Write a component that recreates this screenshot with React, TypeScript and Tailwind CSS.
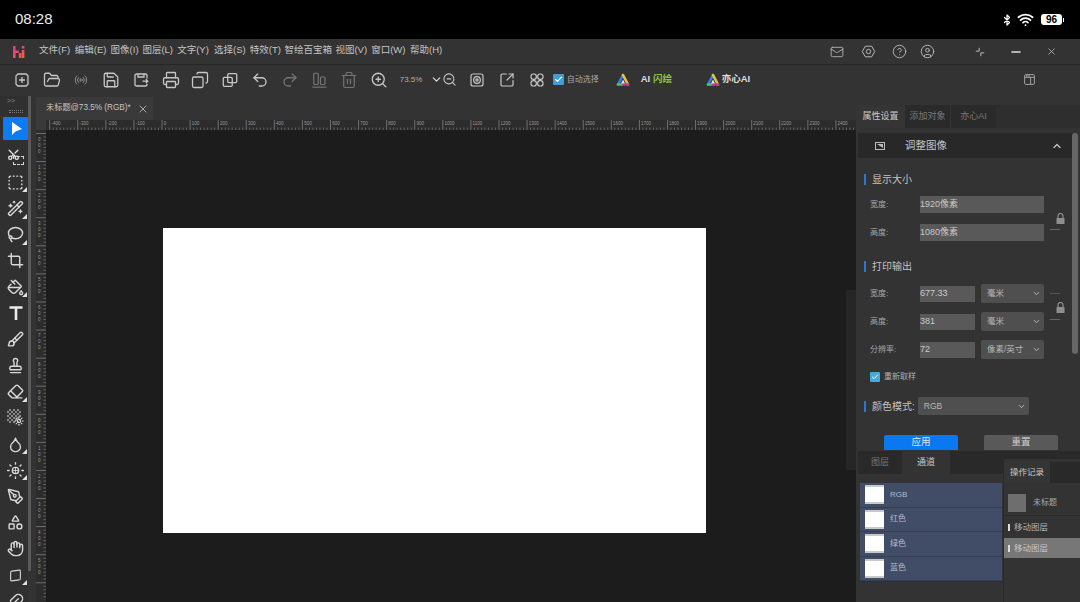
import React from 'react';
import {
  Bluetooth, Wifi, Mail, HelpCircle, CircleUser, Minus, X, FolderOpen, Radio, Save, Printer, Copy,
  Undo2, Redo2, Trash2, ZoomIn, ZoomOut, ChevronDown, ChevronUp, SquareArrowOutUpRight, Check,
  Scissors, SquareDashed, Lasso, Crop, PaintBucket, Brush, Stamp, Eraser, Droplet, PenTool,
  Shapes, Hand, Wand2, Sun, Plus, Square, Feather,
} from 'lucide-react';

const FONT = "font-['Liberation_Sans','Noto_Sans_CJK_SC',sans-serif]";

const menus = [
  ['文件(F)', 'w-[30px]'], ['编辑(E)', 'w-[30px]'], ['图像(I)', 'w-[26px]'], ['图层(L)', 'w-[29px]'],
  ['文字(Y)', 'w-[31px]'], ['选择(S)', 'w-[30px]'], ['特效(T)', 'w-[29px]'], ['智绘百宝箱', 'w-[45px]'],
  ['视图(V)', 'w-[30px]'], ['窗口(W)', 'w-[33px]'], ['帮助(H)', 'w-[32px]'],
];

function Logo() {
  return (
    <svg width="12" height="14" viewBox="0 0 12 14" className="shrink-0">
      <defs>
        <linearGradient id="hi" x1="0" y1="0" x2="1" y2="1">
          <stop offset="0" stopColor="#e0359b" />
          <stop offset="1" stopColor="#f0633a" />
        </linearGradient>
      </defs>
      <path d="M0 1h2.600v4.500h3.200V8H2.600v5H0zM5.800 8h2.600v5H5.800zM8.800 5h2.600v8H8.800zM8.800 1h2.600v2.600H8.800z" fill="url(#hi)" />
    </svg>
  );
}

function AiLogo() {
  return (
    <svg width="14" height="14" viewBox="0 0 14 14" fill="none" strokeWidth="2.600" strokeLinecap="round">
      <path d="M7 2 2 11.500" stroke="#2f80ed" />
      <path d="M7 2 12 11.500" stroke="#e8c33a" />
      <path d="M2 11.500h4" stroke="#4cc26a" />
      <path d="M12 11.500H7" stroke="#c0399b" />
      <path d="M7 6.500 9 10.500H5z" fill="#e6e6e6" stroke="none" />
    </svg>
  );
}

function LockIcon() {
  return (
    <svg width="9" height="11" viewBox="0 0 9 11" className="block">
      <path d="M2 5V3a2.500 2.500 0 0 1 5 0v2" fill="none" stroke="#8e8e8e" strokeWidth="1.200" />
      <rect x="0.500" y="5" width="8" height="6" rx="0.500" fill="#8e8e8e" />
    </svg>
  );
}

const ic = 'w-[18px] h-[18px] text-[#c8c8c8]';
const icDim = 'w-[18px] h-[18px] text-[#747474]';

function ToolbarIcons() {
  return (
    <>
      <svg viewBox="0 0 24 24" fill="none" stroke="currentColor" strokeWidth="1.700" className={ic}>
        <path d="M4 6.500 6.500 4h11L20 6.500v11L17.500 20h-11L4 17.500zM12 8v8M8 12h8" />
      </svg>
      <FolderOpen className={ic} strokeWidth={1.7} />
      <Radio className="w-[14px] h-[14px] text-[#8a8a8a]" strokeWidth={1.7} />
      <Save className={ic} strokeWidth={1.7} />
      <svg viewBox="0 0 24 24" fill="none" stroke="currentColor" strokeWidth="1.700" className={ic}>
        <path d="M20 10V5.500L18.500 4H5.500L4 5.500v13L5.500 20h13l1.500-1.500V17M8 4v4h8V4M14 13.500h7M18.500 11l2.500 2.500-2.500 2.500" />
      </svg>
      <Printer className={ic} strokeWidth={1.7} />
      <Copy className={`${ic} -scale-x-100`} strokeWidth={1.7} />
      <svg viewBox="0 0 24 24" fill="none" stroke="currentColor" strokeWidth="1.700" className={ic}>
        <rect x="9" y="3.500" width="12" height="12" rx="1.500" />
        <rect x="3" y="8.500" width="12" height="12" rx="1.500" />
      </svg>
      <Undo2 className={ic} strokeWidth={1.7} />
      <Redo2 className={icDim} strokeWidth={1.7} />
      <svg viewBox="0 0 24 24" fill="none" stroke="currentColor" strokeWidth="1.600" className={icDim}>
        <rect x="5" y="3" width="6" height="15" rx="1" />
        <rect x="14" y="8" width="6" height="10" rx="1" />
        <path d="M3 21.500h19" />
      </svg>
      <Trash2 className={icDim} strokeWidth={1.6} />
      <ZoomIn className={ic} strokeWidth={1.7} />
    </>
  );
}

function Corner() {
  return <span className="absolute right-[1px] bottom-[3px] w-0 h-0 border-l-[5px] border-l-transparent border-b-[5px] border-b-[#e0e0e0]" />;
}

const toolIc = 'w-[17px] h-[17px] text-[#d8d8d8]';
const tools: [React.ReactNode, boolean][] = [
  [<svg width="14" height="16" viewBox="0 0 14 16"><path d="M3 1v13l3.500-3.500L13 8z" fill="#fff" /></svg>, false],
  [
    <span className="relative block w-[17px] h-[17px]">
      <Scissors className="w-[13px] h-[13px] text-[#e4e4e4] -rotate-90" strokeWidth={2.4} />
      <span className="absolute right-0 bottom-0 w-[11px] h-[9px] border border-dashed border-[#d8d8d8]" />
    </span>,
    false,
  ],
  [<SquareDashed className={toolIc} strokeWidth={2} />, true],
  [<Wand2 className={toolIc} strokeWidth={2} />, true],
  [<Lasso className={toolIc} strokeWidth={2} />, true],
  [<Crop className={toolIc} strokeWidth={2} />, false],
  [<PaintBucket className={toolIc} strokeWidth={2} />, true],
  [
    <svg width="16" height="16" viewBox="0 0 16 16" fill="none" stroke="#ececec" strokeWidth="2.600">
      <path d="M1.500 2.500h13M8 2.500V15" />
    </svg>,
    false,
  ],
  [<Brush className={toolIc} strokeWidth={2} />, false],
  [<Stamp className={toolIc} strokeWidth={2} />, false],
  [<Eraser className={toolIc} strokeWidth={2} />, true],
  [
    <span className="relative block w-[17px] h-[17px]">
      <span className="absolute left-0 top-0 w-[14px] h-[14px] bg-[repeating-conic-gradient(#888_0_25%,#333_0_50%)] bg-[length:4px_4px]" />
      <Sun className="absolute right-0 bottom-0 w-[10px] h-[10px] text-[#ddd]" strokeWidth={2.5} />
    </span>,
    false,
  ],
  [<Droplet className={toolIc} strokeWidth={2} />, true],
  [
    <span className="relative block w-[19px] h-[19px]">
      <Sun className="w-[19px] h-[19px] text-[#d8d8d8]" strokeWidth={1.7} />
      <Plus className="absolute left-[6px] top-[6px] w-[7px] h-[7px] text-[#d8d8d8]" strokeWidth={3} />
    </span>,
    true,
  ],
  [<PenTool className={toolIc} strokeWidth={2} />, false],
  [<Shapes className={toolIc} strokeWidth={2} />, false],
  [<Hand className={toolIc} strokeWidth={2} />, false],
  [<Square className="w-[13px] h-[13px] text-[#d8d8d8] skew-y-[-8deg]" strokeWidth={2} />, true],
  [<Feather className={toolIc} strokeWidth={2} />, false],
];

const hLabels = [-400, -300, -200, -100, 0, 100, 200, 300, 400, 500, 600, 700, 800, 900, 1000, 1100, 1200, 1300, 1400, 1500, 1600, 1700, 1800, 1900, 2000, 2100, 2200, 2300, 2400];

function HRuler() {
  return (
    <svg width="809" height="10" className="block shrink-0">
      {Array.from({ length: 230 }, (_, i) => {
        const x = 3.7 + i * 3.51;
        const major = i % 8 === 0;
        return <line key={i} x1={x} x2={x} y1={major ? 0 : 7.5} y2="10" stroke={major ? '#8a8a8a' : '#777'} strokeWidth="0.7" />;
      })}
      {hLabels.map((n, i) => (
        <text key={n} x={5.5 + i * 28.07} y="5" fontSize="4.500" fill="#9a9a9a" fontFamily="Liberation Sans">{n}</text>
      ))}
    </svg>
  );
}

function VRuler() {
  return (
    <svg width="10" height="470" className="block shrink-0">
      {Array.from({ length: 135 }, (_, i) => {
        const y = 3.5 + i * 3.51;
        const major = i % 8 === 0;
        return <line key={i} x1={major ? 0 : 7.5} x2="10" y1={y} y2={y} stroke={major ? '#8a8a8a' : '#777'} strokeWidth="0.7" />;
      })}
      {Array.from({ length: 16 }, (_, i) => (
        <g key={i} fill="#9a9a9a" fontSize="4.500" fontFamily="Liberation Sans">
          <text x="2" y={11 + i * 28.07}>{i % 10}</text>
          <text x="2" y={17 + i * 28.07}>0</text>
          <text x="2" y={23 + i * 28.07}>0</text>
        </g>
      ))}
    </svg>
  );
}

function SectionTitle({ children }: { children: React.ReactNode }) {
  return (
    <div className="flex items-center h-[14px] text-[10px] text-[#c4c4c4] pl-[7px]">
      <span className="w-[2px] h-[11px] bg-[#2a78d0] mr-[6px]" />
      {children}
    </div>
  );
}

function Field({ label, value, wide }: { label: string; value: string; wide?: boolean }) {
  return (
    <div className={`flex items-center pl-[14px] ${wide ? 'h-[17px]' : 'h-[16px]'}`}>
      <span className="w-[50px] text-[8px] text-[#a8a8a8]">{label}</span>
      <span className={`h-full flex items-center bg-[#595959] text-[9px] text-[#c8c8c8] ${wide ? 'w-[124px]' : 'w-[55px]'}`}>{value}</span>
    </div>
  );
}

function SelectBox({ text, className }: { text: string; className: string }) {
  return (
    <span className={`flex items-center justify-between rounded-[2px] bg-[#4f4f4f] text-[8.500px] text-[#b8b8b8] pl-[6px] pr-[3px] ${className}`}>
      {text}
      <ChevronDown className="w-[9px] h-[9px] text-[#bbb]" strokeWidth={2.5} />
    </span>
  );
}

function PrintRow({ label, value, unit }: { label: string; value: string; unit: string }) {
  return (
    <div className="flex items-center h-[19px] pl-[14px]">
      <span className="w-[50px] text-[8px] text-[#a8a8a8]">{label}</span>
      <span className="w-[55px] h-[16px] flex items-center bg-[#595959] text-[9px] text-[#c8c8c8]">{value}</span>
      <SelectBox text={unit} className="w-[63px] h-[19px] ml-[6px]" />
    </div>
  );
}

function Channel({ name }: { name: string }) {
  return (
    <div className="flex items-center h-[24.500px] pl-[5px] border-b border-[#343d52]">
      <span className="w-[19px] h-[19px] bg-white border-y-2 border-y-[#c9c9c9]" />
      <span className="ml-[6px] text-[8px] text-[#b4bccb]">{name}</span>
    </div>
  );
}

export default function App() {
  return (
    <div className={`w-[1080px] h-[602px] overflow-hidden flex flex-col bg-[#333] ${FONT}`}>
      {/* Status bar */}
      <div className="h-[39px] shrink-0 bg-black flex items-center justify-between pl-[15px] pr-[16px] text-white">
        <span className="text-[15px] font-medium text-[#eee]">08:28</span>
        <div className="flex items-center">
          <Bluetooth className="w-[12px] h-[14px]" strokeWidth={2.5} />
          <Wifi className="w-[17px] h-[17px] ml-[4px]" strokeWidth={2.5} />
          <span className="ml-[7px] w-[21px] h-[11px] rounded-[3px] bg-white text-black text-[10px] leading-[11px] font-bold text-center">96</span>
          <span className="w-[1px] h-[4px] bg-white ml-[1px]" />
        </div>
      </div>

      {/* Menu bar */}
      <div className="h-[26px] shrink-0 flex items-center border-b border-[#262626] text-[9.500px] text-[#c4c4c4]">
        <span className="ml-[13px] mr-[14px] flex"><Logo /></span>
        <div className="flex gap-[5.800px] mb-[2px]">
          {menus.map(([m, w]) => (
            <span key={m} className={`${w} whitespace-nowrap`}>{m}</span>
          ))}
        </div>
        <div className="ml-auto flex items-center text-[#b8b8b8]">
          <Mail className="w-[14px] h-[14px]" strokeWidth={1.5} />
          <svg viewBox="0 0 24 24" fill="none" stroke="currentColor" strokeWidth="1.600" className="w-[15px] h-[15px] ml-[17px]">
            <path d="M7 3.500h10L22 12l-5 8.500H7L2 12z" />
            <circle cx="12" cy="12" r="3.500" />
          </svg>
          <HelpCircle className="w-[15px] h-[15px] ml-[16px]" strokeWidth={1.5} />
          <CircleUser className="w-[15px] h-[15px] ml-[13px]" strokeWidth={1.5} />
          <svg viewBox="0 0 12 12" fill="none" stroke="currentColor" strokeWidth="1.200" className="w-[10px] h-[10px] ml-[40px]">
            <path d="M5 1v4H1M11 7H7v4" />
          </svg>
          <Minus className="w-[14px] h-[14px] ml-[24px] text-[#ddd]" strokeWidth={2.2} />
          <X className="w-[11px] h-[11px] ml-[23px]" strokeWidth={1.8} />
          <span className="w-[23px]" />
        </div>
      </div>

      {/* Toolbar */}
      <div className="h-[31px] shrink-0 flex items-center text-[#c8c8c8] pb-[2px]">
        <div className="ml-[7px] grid grid-cols-[repeat(13,29.750px)] justify-items-center items-center">
          <ToolbarIcons />
        </div>
        <span className="ml-[6px] text-[8px] text-[#b0b0b0] w-[24px]">73.5%</span>
        <ChevronDown className="w-[13px] h-[13px] ml-[6px] text-[#ddd]" strokeWidth={2.2} />
        <ZoomOut className="w-[15px] h-[15px] -ml-[1px]" strokeWidth={1.7} />
        <svg viewBox="0 0 24 24" fill="none" stroke="currentColor" strokeWidth="1.800" className="w-[16px] h-[16px] ml-[12px]">
          <rect x="3" y="3" width="18" height="18" rx="3" />
          <circle cx="12" cy="12" r="5" />
          <circle cx="12" cy="12" r="1.800" />
        </svg>
        <SquareArrowOutUpRight className="w-[16px] h-[16px] ml-[14px]" strokeWidth={1.8} />
        <svg viewBox="0 0 24 24" fill="none" stroke="currentColor" strokeWidth="1.800" className="w-[16px] h-[16px] ml-[14px]">
          <rect x="3" y="3" width="8" height="8" rx="3.500" />
          <rect x="13" y="3" width="8" height="8" rx="3.500" />
          <rect x="3" y="13" width="8" height="8" rx="3.500" />
          <rect x="13" y="13" width="8" height="8" rx="3.500" />
        </svg>
        <span className="ml-[8px] w-[11px] h-[11px] rounded-[1px] bg-[#3d9fd8] flex items-center justify-center">
          <Check className="w-[9px] h-[9px] text-white" strokeWidth={3} />
        </span>
        <span className="ml-[3px] text-[8px] text-[#a8a8a8] whitespace-nowrap w-[33px]">自动选择</span>
        <span className="ml-[16px] flex"><AiLogo /></span>
        <span className="ml-[11px] text-[9.500px] font-bold text-[#ddd] whitespace-nowrap w-[30px]">AI <span className="text-[#8cc63f]">闪绘</span></span>
        <span className="ml-[35px] flex"><AiLogo /></span>
        <span className="ml-[2px] text-[9.500px] font-bold text-[#ddd] whitespace-nowrap">亦心AI</span>
        <svg viewBox="0 0 24 24" fill="none" stroke="currentColor" strokeWidth="1.700" className="w-[13px] h-[13px] ml-auto mr-[44px] text-[#aaa]">
          <rect x="3" y="3" width="18" height="18" rx="2" />
          <path d="M3 8h18M14 8v13M7 3v5M11 3v5" />
        </svg>
      </div>

      {/* Body */}
      <div className="flex-1 min-h-0 flex">
        {/* Tool column */}
        <div className="w-[28px] shrink-0 flex flex-col bg-[#303030] pl-[3px]">
          <div className="h-[10px] shrink-0 text-[7px] leading-[9px] text-[#888] pl-[4px]">&gt;&gt;</div>
          <div className="h-[11px] shrink-0 flex justify-center items-center">
            <span className="w-[14px] h-[3px] border-y border-dotted border-[#777]" />
          </div>
          {tools.map(([icon, corner], i) => (
            <div
              key={i}
              className={`relative shrink-0 w-[25px] flex items-center justify-center ${i === 0 ? 'bg-[#0d7bf2] rounded-[1px] h-[23px] mb-[3px]' : 'h-[26.200px]'}`}
            >
              {icon}
              {corner && <Corner />}
            </div>
          ))}
        </div>
        <div className="w-[8px] shrink-0 flex">
          <span className="w-[3px] h-[475px] bg-[#5a5a5a]" />
        </div>

        {/* Document area */}
        <div className="flex-1 min-w-0 flex flex-col">
          <div className="h-[24px] shrink-0 flex items-end">
            <div className="w-[117px] h-[23px] bg-[#3a3a3a] flex items-center text-[8.200px] text-[#c4c4c4] pl-[10px] whitespace-nowrap">
              未标题@73.5% (RGB)*
              <X className="w-[12px] h-[12px] ml-[6px]" strokeWidth={1.6} />
            </div>
          </div>
          <div className="h-[10px] shrink-0 flex bg-[#2c2c2c]">
            <span className="w-[10px] shrink-0 bg-[#3a3a3a]" />
            <HRuler />
          </div>
          <div className="flex-1 min-h-0 flex">
            <div className="bg-[#2c2c2c] w-[10px] shrink-0"><VRuler /></div>
            <div className="flex-1 bg-[#1c1c1c] relative">
              <div className="w-[543px] h-[305px] bg-white ml-[117px] mt-[98px]" />
              <span className="absolute right-0 top-[160px] w-[10px] h-[180px] bg-[#262626]" />
            </div>
          </div>
        </div>

        {/* Right panel */}
        <div className="relative w-[224px] shrink-0 bg-[#333] flex flex-col">
          <div className="h-[9px] shrink-0" />
          <div className="h-[23px] shrink-0 flex text-[9px]">
            <span className="w-[49px] bg-[#353535] text-[#c8c8c8] flex items-center justify-center">属性设置</span>
            <span className="w-[45px] bg-[#2a2a2a] text-[#777] flex items-center justify-center">添加对象</span>
            <span className="w-[45px] ml-[1px] bg-[#2a2a2a] text-[#777] flex items-center justify-center">亦心AI</span>
            <span className="flex-1 bg-[#2e2e2e]" />
          </div>
          <div className="h-[5px] shrink-0" />
          <div className="flex-1 min-h-0 flex flex-col relative">
            <span className="absolute right-[2px] top-0 w-[6px] h-[221px] rounded-full bg-[#666]" />
            <div className="ml-[2px] mr-[8px] h-[25px] shrink-0 bg-[#282828] flex items-center text-[#c4c4c4]">
              <svg width="10" height="8" viewBox="0 0 10 8" className="ml-[17px]">
                <rect x="0.500" y="0.500" width="9" height="7" fill="none" stroke="#bbb" />
                <path d="M2 2h6v4z" fill="#bbb" />
              </svg>
              <span className="ml-[20px] text-[10.500px]">调整图像</span>
              <ChevronUp className="ml-auto mr-[9px] w-[12px] h-[12px]" strokeWidth={2.5} />
            </div>
            <div className="mt-[14px] pl-[1px]"><SectionTitle>显示大小</SectionTitle></div>
            <div className="mt-[10px] flex">
              <div className="flex flex-col gap-[11px]">
                <Field label="宽度:" value="1920像素" wide />
                <Field label="高度:" value="1080像素" wide />
              </div>
              <div className="ml-[6px] mt-[17px] flex flex-col items-start">
                <span className="ml-[6px]"><LockIcon /></span>
                <span className="mt-[5px] w-[10px] h-px bg-[#666]" />
              </div>
            </div>
            <div className="mt-[18px] pl-[1px]"><SectionTitle>打印输出</SectionTitle></div>
            <div className="mt-[11px] flex">
              <div className="flex flex-col gap-[9px]">
                <PrintRow label="宽度:" value="677.33" unit="毫米" />
                <PrintRow label="高度:" value="381" unit="毫米" />
                <PrintRow label="分辨率:" value="72" unit="像素/英寸" />
              </div>
              <div className="ml-[6px] mt-[9px] flex flex-col items-start">
                <span className="w-[10px] h-px bg-[#555]" />
                <span className="ml-[6px] mt-[8px]"><LockIcon /></span>
                <span className="mt-[6px] w-[10px] h-px bg-[#666]" />
              </div>
            </div>
            <div className="mt-[12px] ml-[14px] flex items-center h-[11px]">
              <span className="w-[10px] h-[10px] rounded-[1px] bg-[#4aa8d8] flex items-center justify-center">
                <Check className="w-[8px] h-[8px] text-white" strokeWidth={3} />
              </span>
              <span className="ml-[4px] text-[8px] text-[#b0b0b0]">重新取样</span>
            </div>
            <div className="mt-[15px] flex items-center pl-[1px]">
              <SectionTitle>颜色模式:</SectionTitle>
              <SelectBox text="RGB" className="ml-[3px] w-[111px] h-[18px]" />
            </div>
            <div className="mt-[20px] flex shrink-0">
              <span className="ml-[28px] w-[74px] h-[15px] rounded-t-[2px] bg-[#0a78f0] text-[9.500px] text-[#e4e4e4] flex justify-center items-center">应用</span>
              <span className="ml-[26px] w-[74px] h-[15px] rounded-t-[2px] bg-[#595959] text-[9.500px] text-[#d0d0d0] flex justify-center items-center">重置</span>
            </div>

            {/* Channels */}
            <div className="mt-[1px] flex h-[23px] shrink-0 ml-[2px] text-[9px]">
              <span className="w-[44px] bg-[#292929] text-[#777] flex items-center justify-center">图层</span>
              <span className="w-[48px] bg-[#333] text-[#c8c8c8] flex items-center justify-center">通道</span>
              <span className="flex-1 bg-[#292929]" />
            </div>
            <div className="mt-[9px] ml-[4px] w-[142px] shrink-0 bg-[#414c66] border-b border-[#2b2f3a]">
              <Channel name="RGB" />
              <Channel name="红色" />
              <Channel name="绿色" />
              <Channel name="蓝色" />
            </div>
          </div>

          {/* Floating history panel */}
          <div className="absolute left-[147px] top-[363px] right-0 bottom-0 bg-[#333] border-l border-[#2a2a2a] flex flex-col text-[8.500px]">
            <div className="h-[21px] shrink-0 flex bg-[#292929] mt-[3px]">
              <span className="w-[46px] bg-[#353535] text-[#c8c8c8] flex items-center justify-center">操作记录</span>
            </div>
            <div className="h-[33px] shrink-0 flex items-center border-b border-[#2a2a2a] pl-[4px] pt-[7px]">
              <span className="w-[18px] h-[18px] bg-[#6e6e6e]" />
              <span className="ml-[7px] text-[#a8a8a8] text-[8px]">未标题</span>
            </div>
            <div className="h-[22px] shrink-0 flex items-center pl-[4px] text-[#b0b0b0]">
              <span className="w-[2px] h-[7px] bg-[#ddd] mr-[4px]" />移动图层
            </div>
            <div className="h-[20px] shrink-0 flex items-center pl-[4px] bg-[#777] text-[#c4c4c4]">
              <span className="w-[2px] h-[7px] bg-[#ddd] mr-[4px]" />移动图层
            </div>
          </div>
        </div>
      </div>
    </div>
  );
}
